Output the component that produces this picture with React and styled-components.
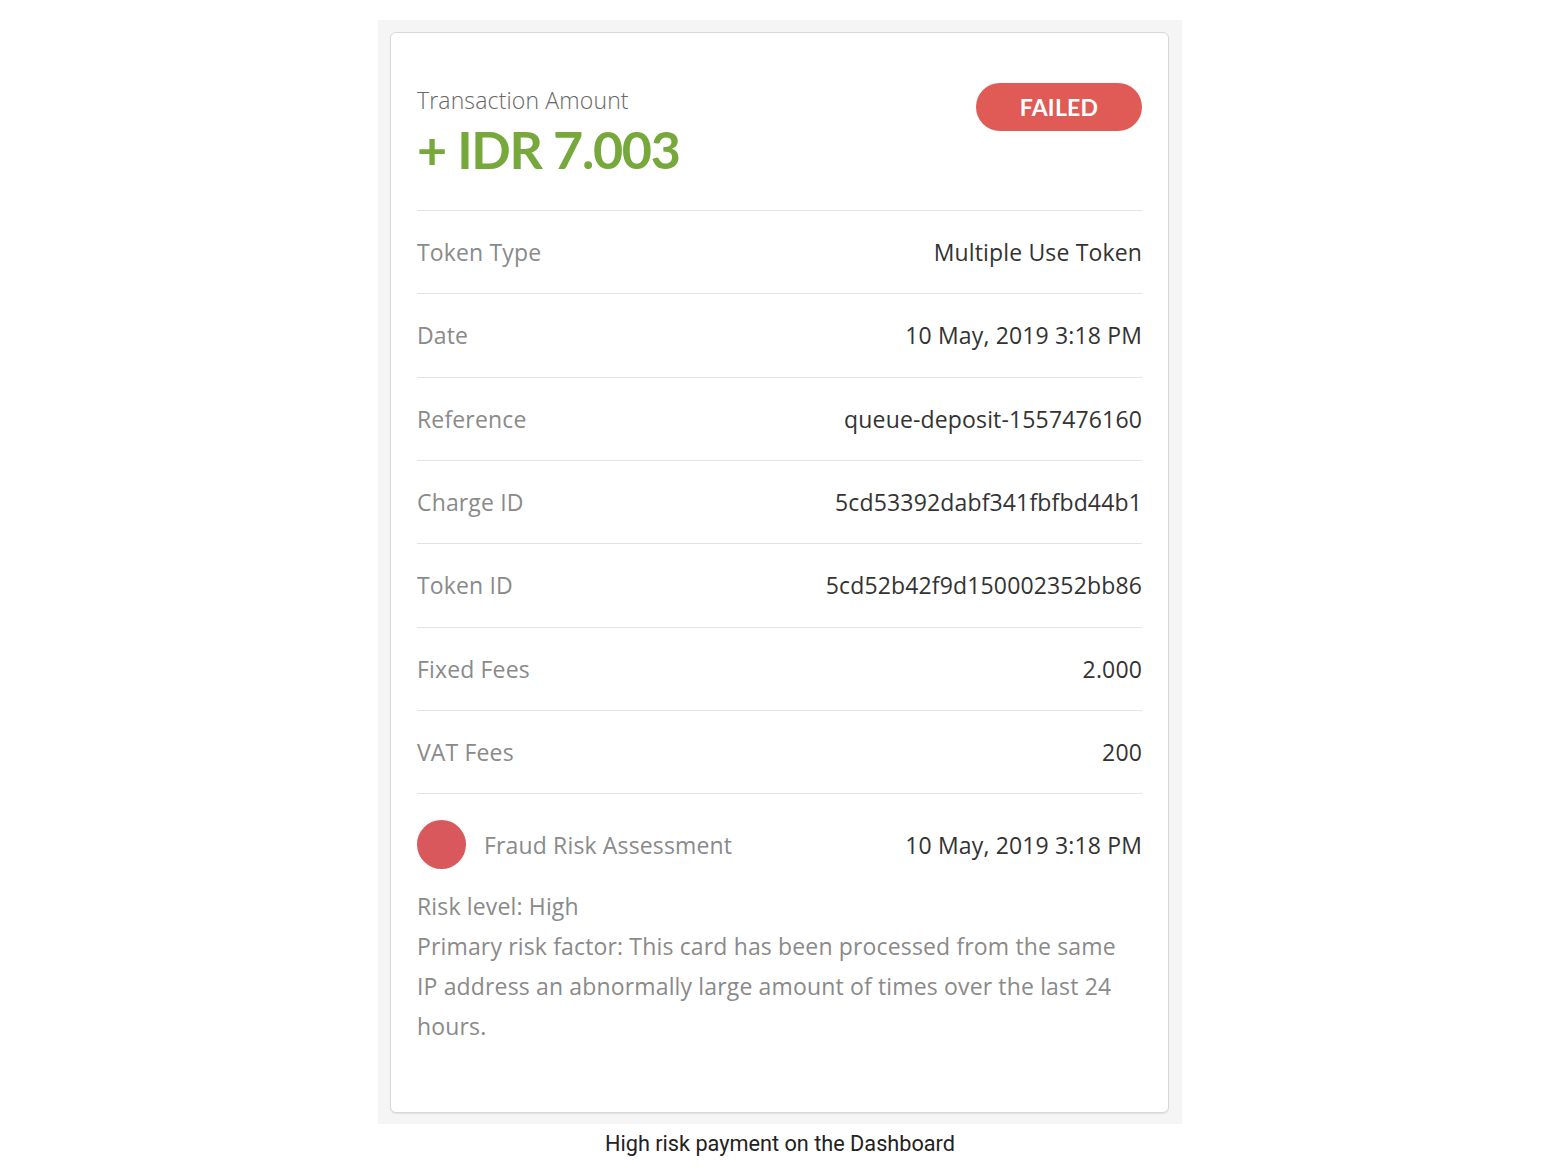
import React from "react";
import styled, { createGlobalStyle } from "styled-components";

const Global = createGlobalStyle`
  html, body { margin: 0; padding: 0; background: #ffffff; }
  body { font-family: "Open Sans", "Liberation Sans", sans-serif; }
`;

const Page = styled.div`
  display: flex;
  flex-direction: column;
  align-items: center;
  padding-top: 20px;
  padding-left: 2px;
`;

const Frame = styled.div`
  width: 804px;
  box-sizing: border-box;
  background: #f5f5f5;
  padding: 12px 13px 11px 12px;
`;

const Card = styled.div`
  background: #ffffff;
  border: 1px solid #d8d8d8;
  border-radius: 6px;
  box-shadow: 0 1px 1px rgba(0, 0, 0, 0.08);
  padding: 50px 26px 66px 26px;
`;

const Header = styled.div`
  display: flex;
  justify-content: space-between;
  align-items: flex-start;
  padding-bottom: 29px;
`;

const AmountBlock = styled.div`
  display: flex;
  flex-direction: column;
`;

const AmountLabel = styled.div`
  font-family: "Open Sans", sans-serif;
  font-weight: 300;
  font-size: 23px;
  letter-spacing: 0.15px;
  line-height: 34px;
  color: #666;
`;

const Amount = styled.div`
  font-family: Lato, "Open Sans", sans-serif;
  font-weight: 700;
  font-size: 52px;
  line-height: 64px;
  color: #76a83c;
  letter-spacing: -1.3px;
`;

const StatusPill = styled.div`
  height: 48px;
  width: 166px;
  border-radius: 24px;
  background: #e05a56;
  color: #fff;
  display: flex;
  align-items: center;
  justify-content: center;
  font-family: Lato, "Open Sans", sans-serif;
  font-weight: 700;
  font-size: 23px;
  letter-spacing: 0.2px;
`;

const Row = styled.div`
  display: flex;
  justify-content: space-between;
  align-items: center;
  height: 82.33px;
  border-top: 1px solid #e3e3e3;
  font-size: 23px;
  letter-spacing: 0.15px;
`;

const Label = styled.span`
  color: #8a8a8a;
`;

const Value = styled.span`
  color: #333;
`;

const Fraud = styled.div`
  border-top: 1px solid #e3e3e3;
  padding-top: 26px;
`;

const FraudHeader = styled.div`
  display: flex;
  align-items: center;
  height: 49px;
  font-size: 23px;
  letter-spacing: 0.15px;
`;

const Dot = styled.span`
  width: 49px;
  height: 49px;
  border-radius: 50%;
  background: #d9585c;
  flex-shrink: 0;
  margin-right: 18px;
`;

const FraudTitle = styled(Label)`
  flex: 1;
`;

const RiskText = styled.div`
  margin-top: 17px;
  font-size: 23px;
  letter-spacing: 0.15px;
  line-height: 40px;
  color: #8a8a8a;
`;

const Caption = styled.div`
  font-family: Roboto, "Liberation Sans", sans-serif;
  font-size: 21.7px;
  color: #222;
  margin-top: 6px;
  line-height: 28px;
`;

const rows = [
  ["Token Type", "Multiple Use Token"],
  ["Date", "10 May, 2019 3:18 PM"],
  ["Reference", "queue-deposit-1557476160"],
  ["Charge ID", "5cd53392dabf341fbfbd44b1"],
  ["Token ID", "5cd52b42f9d150002352bb86"],
  ["Fixed Fees", "2.000"],
  ["VAT Fees", "200"],
];

export default function App() {
  return (
    <>
      <Global />
      <Page>
        <Frame>
          <Card>
            <Header>
              <AmountBlock>
                <AmountLabel>Transaction Amount</AmountLabel>
                <Amount>+ IDR 7.003</Amount>
              </AmountBlock>
              <StatusPill>FAILED</StatusPill>
            </Header>
            {rows.map(([l, v]) => (
              <Row key={l}>
                <Label>{l}</Label>
                <Value>{v}</Value>
              </Row>
            ))}
            <Fraud>
              <FraudHeader>
                <Dot />
                <FraudTitle>Fraud Risk Assessment</FraudTitle>
                <Value>10 May, 2019 3:18 PM</Value>
              </FraudHeader>
              <RiskText>
                Risk level: High
                <br />
                Primary risk factor: This card has been processed from the same IP
                address an abnormally large amount of times over the last 24 hours.
              </RiskText>
            </Fraud>
          </Card>
        </Frame>
        <Caption>High risk payment on the Dashboard</Caption>
      </Page>
    </>
  );
}
